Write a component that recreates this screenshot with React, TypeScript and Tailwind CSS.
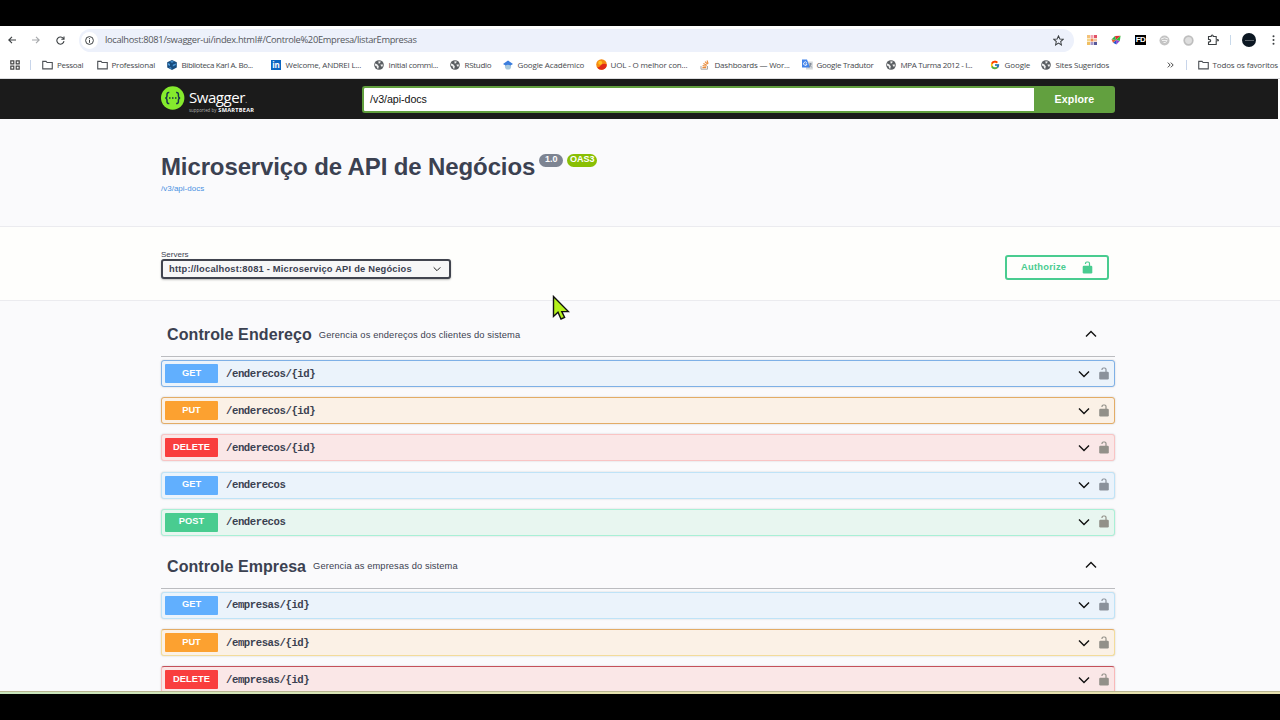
import type { ReactNode } from "react";
import { FcGoogle } from "react-icons/fc";

type Method = "GET" | "PUT" | "DELETE" | "POST";

const METHOD_STYLES: Record<Method, { block: string; badge: string; lock: string }> = {
  GET: { block: "bg-[#ebf3fb]", badge: "bg-[#61affe]", lock: "text-[#8b929b]" },
  PUT: { block: "bg-[#fbf1e6]", badge: "bg-[#fca130]", lock: "text-[#929089]" },
  DELETE: { block: "bg-[#fae7e7]", badge: "bg-[#f93e3e]", lock: "text-[#929089]" },
  POST: { block: "bg-[#e8f6f0]", badge: "bg-[#49cc90]", lock: "text-[#929089]" },
};

function Lock({ className }: { className: string }) {
  return (
    <svg viewBox="0 0 10 13" className={className} fill="none">
      <path d="M3 3V2.4Q3 1 4.4 1H5.6Q7 1 7 2.5V6" stroke="currentColor" strokeWidth="1.2" />
      <rect x="0.2" y="4.8" width="9.6" height="7.7" rx="1.2" fill="currentColor" />
    </svg>
  );
}

function Chevron({ up = false, className }: { up?: boolean; className: string }) {
  return (
    <svg viewBox="0 0 12 8" className={className} fill="none" stroke="#111" strokeWidth="1.4">
      <path d={up ? "M1 6.5 6 1.5 11 6.5" : "M1 1.5 6 6.5 11 1.5"} />
    </svg>
  );
}

function Operation({ method, path, border }: { method: Method; path: string; border: string }) {
  const s = METHOD_STYLES[method];
  return (
    <div className={`mb-[10.2px] flex h-[27px] shrink-0 items-center rounded-[3px] border pl-[3px] pr-[5px] shadow-[0_0_2px_rgba(0,0,0,0.19)] ${s.block} ${border}`}>
      <span className={`flex h-[19px] w-[53px] items-center justify-center rounded-[1px] text-[9.33px] font-bold text-white ${s.badge}`}>{method}</span>
      <span className="ml-2 flex-1 font-['Liberation_Mono',monospace] text-[10.67px] font-bold tracking-[-0.45px] text-[#3b4151]">{path}</span>
      <Chevron className="h-2 w-3" />
      <Lock className={`mb-px ml-[9px] h-[13px] w-[10px] ${s.lock}`} />
    </div>
  );
}

function Section({ title, description, titleClass, descClass, children }: { title: string; description: string; titleClass: string; descClass: string; children: ReactNode }) {
  return (
    <section>
      <header className="mb-[3px] flex h-[43px] items-center border-b border-[#bbbcc0] pl-[6px] pr-[18px]">
        <h3 className={`shrink-0 text-[16px] font-bold text-[#3b4151] ${titleClass}`}>{title}</h3>
        <span className={`flex-1 whitespace-nowrap pt-px text-[9.33px] text-[#3b4151] ${descClass}`}>{description}</span>
        <Chevron up className="mb-[3px] h-2 w-3" />
      </header>
      {children}
    </section>
  );
}

function Folder() {
  return (
    <svg viewBox="0 0 12 10" className="h-[10px] w-[11px]" fill="none" stroke="#4d5156" strokeWidth="1.2">
      <path d="M.8 1H4.4L5.6 2.3H11.2V9.2H.8Z" />
    </svg>
  );
}

function Globe() {
  return (
    <svg viewBox="0 0 10 10" className="h-[10px] w-[10px]">
      <circle cx="5" cy="5" r="4.8" fill="#5a5e62" />
      <path d="M1 3.5 3.2 4.2 4.8 6.2 4.3 8.8 3 8.2 2.8 6.4 1 5.4ZM4.4 1.2 6.8 1.5 6 3.2 4.6 3.4ZM6.4 4.6 9 4.4 8.6 6.4 7.2 6.6Z" fill="#eee" />
    </svg>
  );
}

function Boxes() {
  return (
    <svg viewBox="0 0 10 10" className="h-[10px] w-[10px]">
      <path d="M5 0 9.8 2.2V7.6L5 10 .2 7.6V2.2Z" fill="#174c7e" />
      <path d="M1 3 3 4V6L1 5ZM5.8 4.8 8.8 3.4V5L5.8 6.4ZM3 1.8 5 1 7 1.8 5 2.8ZM2.6 7 4.4 7.8V9L2.6 8.1Z" fill="#4f9bdc" />
    </svg>
  );
}

function LinkedIn() {
  return <span className="flex h-[10px] w-[10px] items-center justify-center bg-[#0a66c2] text-[8px] font-bold leading-none text-white">in</span>;
}

function Scholar() {
  return (
    <svg viewBox="0 0 10 10" className="h-[10px] w-[10px]">
      <circle cx="5" cy="6.5" r="3.1" fill="#a8c8dc" />
      <path d="M5 .4 10 4 7.5 5.6Q5 3.8 2.5 5.6L0 4Z" fill="#3b7ddd" />
    </svg>
  );
}

function Uol() {
  return (
    <svg viewBox="0 0 11 11" className="h-[11px] w-[11px]">
      <circle cx="5.5" cy="5.5" r="5.3" fill="#f58a12" />
      <path d="M10.8 5.5A5.3 5.3 0 0 1 1.2 8.6Q4 8 5.5 5.5Q8 3.8 10.8 5.5Z" fill="#e02a18" />
      <circle cx="4.2" cy="3.7" r="2" fill="#ffc322" />
    </svg>
  );
}

function Stack() {
  return (
    <svg viewBox="0 0 10 10" className="h-[10px] w-[10px]" fill="none">
      <path d="M1 6V9.2H7.5V6" stroke="#a8a8a8" />
      <path d="M2.4 7.6H6.2M2.6 5.6 6.4 6.2M3.4 3.6 6.8 5.2M5 1.6 7.6 4.2M7 .5 8.2 3.6" stroke="#e98b3a" strokeWidth="1.1" />
    </svg>
  );
}

function Translate() {
  return (
    <svg viewBox="0 0 11 11" className="h-[11px] w-[11px]">
      <rect x="4" y="2.5" width="6.8" height="8" fill="#d4d7da" />
      <path d="M0 .5H5L8 8.5H0Z" fill="#4384ea" />
      <path d="M4.8 3.8A1.7 1.7 0 1 0 5 5H3.5" stroke="white" fill="none" strokeWidth=".9" />
      <path d="M7 5H10M8.5 4V5Q8.5 7 7 8.3M7.5 6 9.8 8.4" stroke="#6d7886" fill="none" strokeWidth=".7" />
    </svg>
  );
}

function Bookmark({ icon, label, className, textClass }: { icon: ReactNode; label: string; className: string; textClass: string }) {
  return (
    <div className={`flex shrink-0 items-center whitespace-nowrap ${className}`}>
      <span className="flex w-[11px] shrink-0 justify-center">{icon}</span>
      <span className={`ml-1 ${textClass}`}>{label}</span>
    </div>
  );
}

function BookmarksBar() {
  return (
    <div className="flex h-[25px] items-center border-b border-[#dcdde0] pb-[3px] pl-[10px] font-['Open_Sans',sans-serif] text-[8px] text-[#45484c]">
      <svg viewBox="0 0 10 10" className="h-[10px] w-[10px]" fill="none" stroke="#444" strokeWidth="1.2">
        <path d="M.8.8H3.8V3.8H.8ZM6.2.8H9.2V3.8H6.2ZM.8 6.2H3.8V9.2H.8ZM6.2 6.2H9.2V9.2H6.2Z" />
      </svg>
      <span className="ml-[10px] mr-[11px] h-[10px] w-px bg-[#c8d5ea]" />
      <Bookmark icon={<Folder />} label="Pessoal" className="w-[54.5px]" textClass="tracking-[-0.3px]" />
      <Bookmark icon={<Folder />} label="Professional" className="w-[70px]" textClass="tracking-[-0.2px]" />
      <Bookmark icon={<Boxes />} label="Biblioteca Karl A. Bo..." className="w-[104px]" textClass="tracking-[-0.4px]" />
      <Bookmark icon={<LinkedIn />} label="Welcome, ANDREI L..." className="w-[103px]" textClass="tracking-[-0.2px]" />
      <Bookmark icon={<Globe />} label="Initial commi..." className="w-[76px]" textClass="tracking-[-0.3px]" />
      <Bookmark icon={<Globe />} label="RStudio" className="w-[53px]" textClass="tracking-[-0.3px]" />
      <Bookmark icon={<Scholar />} label="Google Acadêmico" className="w-[93px]" textClass="tracking-[-0.15px]" />
      <Bookmark icon={<Uol />} label="UOL - O melhor con..." className="w-[104px]" textClass="tracking-[-0.15px]" />
      <Bookmark icon={<Stack />} label="Dashboards — Wor..." className="w-[102px]" textClass="tracking-[-0.2px]" />
      <Bookmark icon={<Translate />} label="Google Tradutor" className="w-[84px]" textClass="tracking-[-0.28px]" />
      <Bookmark icon={<Globe />} label="MPA Turma 2012 - I..." className="w-[104px]" textClass="tracking-[-0.35px]" />
      <Bookmark icon={<FcGoogle className="h-[10px] w-[10px]" />} label="Google" className="w-[51px]" textClass="tracking-[-0.1px]" />
      <Bookmark icon={<Globe />} label="Sites Sugeridos" className="w-[126px]" textClass="tracking-[-0.2px]" />
      <svg viewBox="0 0 7 6" className="h-[6px] w-[7px]" fill="none" stroke="#444">
        <path d="M.8.6 3.2 3 .8 5.4M3.8.6 6.2 3 3.8 5.4" />
      </svg>
      <span className="ml-3 mr-[11px] h-[10px] w-px bg-[#c8d5ea]" />
      <Bookmark icon={<Folder />} label="Todos os favoritos" className="" textClass="tracking-[-0.15px]" />
    </div>
  );
}

function Toolbar() {
  return (
    <div className="flex h-7 items-center pl-2">
      <svg viewBox="0 0 8 8" className="h-2 w-2" fill="none" stroke="#3c4043" strokeWidth="1.1">
        <path d="M8 4H1M4 .8.8 4 4 7.2" />
      </svg>
      <svg viewBox="0 0 8 8" className="ml-4 h-2 w-2" fill="none" stroke="#a6a8ab" strokeWidth="1.1">
        <path d="M0 4H7M4 .8 7.2 4 4 7.2" />
      </svg>
      <svg viewBox="0 0 9 9" className="ml-4 h-[9px] w-[9px]" fill="none" stroke="#3c4043" strokeWidth="1.1">
        <path d="M7.6 2.8A3.6 3.6 0 1 0 8 5.2M8 .5V3.2H5.3" />
      </svg>
      <div className="ml-[14px] flex h-[23px] w-[995px] items-center rounded-full bg-[#edf1fb] pl-[2px] pr-[10px]">
        <span className="flex h-[17px] w-[17px] items-center justify-center rounded-full bg-white">
          <svg viewBox="0 0 9 9" className="h-[9px] w-[9px]" fill="none" stroke="#3c4043">
            <circle cx="4.5" cy="4.5" r="3.9" />
            <path d="M4.5 4V6.8M4.5 2.2V3.2" />
          </svg>
        </span>
        <span className="ml-[7px] flex-1 whitespace-nowrap font-['Open_Sans',sans-serif] text-[9.33px] tracking-[-0.32px] text-[#54575c]">localhost:8081/swagger-ui/index.html#/Controle%20Empresa/listarEmpresas</span>
        <svg viewBox="0 0 12 12" className="h-[11px] w-[11px]" fill="none" stroke="#3c4043" strokeWidth="1.1">
          <path d="M6 1 7.5 4.4 11.2 4.7 8.4 7.1 9.2 10.8 6 8.9 2.8 10.8 3.6 7.1.8 4.7 4.5 4.4Z" />
        </svg>
      </div>
      <svg viewBox="0 0 10 10" className="ml-[13px] h-[10px] w-[10px]">
        <path d="M0 0H3V3H0Z" fill="#f3c178" />
        <path d="M3.5 0H6.5V3H3.5Z" fill="#f1a3b0" />
        <path d="M7 0H10V3H7Z" fill="#e15166" />
        <path d="M0 3.5H3V6.5H0Z" fill="#f4d48a" />
        <path d="M3.5 3.5H6.5V6.5H3.5Z" fill="#f08a4c" />
        <path d="M7 3.5H10V6.5H7Z" fill="#f1c1a0" />
        <path d="M0 7H3V10H0Z" fill="#efbf62" />
        <path d="M3.5 7H6.5V10H3.5Z" fill="#a797c7" />
        <path d="M7 7H10V10H7Z" fill="#56589a" />
      </svg>
      <svg viewBox="0 0 10 10" className="ml-[14px] h-[10px] w-[10px]">
        <path d="M.5 4.5 4 1 5 5Z" fill="#27b84a" />
        <path d="M4 1 9.6.8 5 5Z" fill="#e03030" />
        <path d="M9.6.8 8.8 6 5 5Z" fill="#24c53a" />
        <path d="M5 5 8.8 6 5.4 9.5Z" fill="#9040d0" />
        <path d="M5 5 5.4 9.5 2 7.8Z" fill="#2458d0" />
        <path d="M.5 4.5 5 5 2 7.8Z" fill="#e86030" />
      </svg>
      <span className="ml-[14px] flex h-[10px] w-[11px] items-center justify-center bg-black font-['Liberation_Sans',sans-serif] text-[8px] font-bold leading-none tracking-[-0.5px] text-white">FD</span>
      <svg viewBox="0 0 11 11" className="ml-[13px] h-[11px] w-[11px]" fill="none">
        <circle cx="5.5" cy="5.5" r="5" fill="#c4c4c4" />
        <path d="M2 4Q5.5 1.5 9 4M3 5.5H8Q7 8.5 4.5 7.5" stroke="#f1f1f1" />
      </svg>
      <svg viewBox="0 0 11 11" className="ml-[13px] h-[11px] w-[11px]" fill="none">
        <circle cx="5.5" cy="5.5" r="4.3" fill="#dedede" stroke="#bebebe" strokeWidth="1.7" />
      </svg>
      <svg viewBox="0 0 12 12" className="ml-[13px] h-3 w-3" fill="none" stroke="#3c4043" strokeWidth="1.1">
        <path d="M1.5 2.5H4.2V1.8Q5.2.3 6.2 1.8V2.5H9.2V5.2Q12 5.2 11.2 6.8H9.2V10.5H1.5V8Q4 7.8 3.6 6.4Q3.2 5.2 1.5 5.4Z" />
      </svg>
      <span className="ml-[11px] h-[10px] w-px bg-[#c8d9ea]" />
      <span className="ml-[11px] flex h-[14px] w-[14px] items-center justify-center rounded-full bg-[#0c1722]">
        <span className="h-px w-[9px] bg-[#5d646b]" />
      </span>
      <svg viewBox="0 0 3 10" className="ml-[16px] h-[10px] w-[3px]" fill="#3c4043">
        <circle cx="1.5" cy="1.3" r="1" />
        <circle cx="1.5" cy="5" r="1" />
        <circle cx="1.5" cy="8.7" r="1" />
      </svg>
    </div>
  );
}

function SwaggerBar() {
  return (
    <div className="mr-[2px] flex h-10 items-center bg-[#1b1b1b] pl-[161px]">
      <svg viewBox="0 0 24 24" className="mb-[3px] h-6 w-6" fill="none">
        <circle cx="11.7" cy="12" r="11.7" fill="#85ea2d" />
        <path d="M8.3 6.6Q6 6.3 6 8.5V10Q6 11.8 4.3 12Q6 12.2 6 14V15.5Q6 17.7 8.3 17.4M15.1 6.6Q17.4 6.3 17.4 8.5V10Q17.4 11.8 19.1 12Q17.4 12.2 17.4 14V15.5Q17.4 17.7 15.1 17.4" stroke="#173647" strokeWidth="1.5" />
        <path d="M8 12H9.5M11 12H12.5M14 12H15.5" stroke="#173647" strokeWidth="1.4" />
      </svg>
      <div className="ml-1 w-[173px] whitespace-nowrap text-white">
        <div className="mt-[4px] font-['Open_Sans',sans-serif] text-[15px] leading-[17px] tracking-[-0.45px]">Swagger<span className="text-[9px] text-[#aaa]">.</span></div>
        <div className="flex h-[6px] items-center gap-[2px] font-['Open_Sans',sans-serif] text-[4.4px] leading-none">
          <span className="text-[#b5b5b5]">supported by</span>
          <span className="text-[5.6px] font-bold tracking-[0.25px]">SMARTBEAR</span>
        </div>
      </div>
      <div className="flex h-[27px] w-[753px]">
        <div className="flex flex-1 items-center rounded-l-[3px] border-2 border-r-0 border-[#62a03f] bg-white pl-[6px] text-[10.67px] tracking-[-0.05px] text-[#111]">/v3/api-docs</div>
        <div className="flex w-[81px] items-center justify-center rounded-r-[3px] bg-[#62a03f] text-[10.67px] font-bold tracking-[0.1px] text-white">Explore</div>
      </div>
    </div>
  );
}

export default function App() {
  return (
    <div className="relative flex h-[720px] w-[1280px] flex-col overflow-hidden bg-[#fafafc] font-['Liberation_Sans',sans-serif]">
      <div className="h-[26px] shrink-0 bg-black" />
      <div className="shrink-0 bg-white">
        <Toolbar />
        <BookmarksBar />
        <SwaggerBar />
      </div>
      <div className="h-[107px] shrink-0 pl-[161px] pt-[31px]">
        <div className="flex h-[34px] items-center">
          <h1 className="whitespace-nowrap text-[24px] font-bold tracking-[-0.12px] text-[#3b4151]">Microserviço de API de Negócios</h1>
          <span className="mb-[14px] ml-1 flex h-[13px] w-6 items-center justify-center rounded-full bg-[#7d8492] text-[9px] font-bold text-white">1.0</span>
          <span className="mb-[14px] ml-1 flex h-[13px] w-[30px] items-center justify-center rounded-full bg-[#89bf04] text-[9px] font-bold text-white">OAS3</span>
        </div>
        <div className="text-[8px] leading-[9px] text-[#4990e2]">/v3/api-docs</div>
      </div>
      <div className="flex h-[75px] shrink-0 justify-between border-y border-[#ebebef] bg-[#fefefc] pl-[161px] pr-[171px]">
        <div className="pt-[23px]">
          <div className="text-[8px] leading-[9px] text-[#3b4151]">Servers</div>
          <div className="flex h-5 w-[290px] items-center justify-between rounded-[3px] border-2 border-[#41444e] bg-[#f7f7f7] pl-[6px] pr-[8px] text-[9.33px] font-bold text-[#3b4151] shadow-[0_1px_2px_rgba(0,0,0,0.25)]">
            <span className="whitespace-nowrap pt-[2px] tracking-[0.2px]">http://localhost:8081 - Microserviço API de Negócios</span>
            <Chevron className="h-[6px] w-2" />
          </div>
        </div>
        <div className="mt-[28px] flex h-[25px] w-[104px] items-center justify-between rounded-[3px] border-2 border-[#49cc90] pl-[14px] pr-[14px] text-[9.33px] font-bold tracking-[0.25px] text-[#49cc90]">
          <span>Authorize</span>
          <Lock className="mb-px h-[13px] w-[11px]" />
        </div>
      </div>
      <div className="flex min-h-0 flex-1 flex-col overflow-hidden pl-[161px] pr-[165px] pt-[13px]">
        <Section title="Controle Endereço" description="Gerencia os endereços dos clientes do sistema" titleClass="tracking-[0.1px]" descClass="ml-[7px] tracking-[0.12px]">
          <Operation method="GET" path="/enderecos/{id}" border="border-[#7eb0e6]" />
          <Operation method="PUT" path="/enderecos/{id}" border="border-[#e3ac66]" />
          <Operation method="DELETE" path="/enderecos/{id}" border="border-[#f9c4c4]" />
          <Operation method="GET" path="/enderecos" border="border-[#bfe3f7]" />
          <Operation method="POST" path="/enderecos" border="border-[#a9f0d6]" />
        </Section>
        <Section title="Controle Empresa" description="Gerencia as empresas do sistema" titleClass="tracking-[0.08px]" descClass="ml-[7px] tracking-[0.1px]">
          <Operation method="GET" path="/empresas/{id}" border="border-[#bfe3f7]" />
          <Operation method="PUT" path="/empresas/{id}" border="border-[#f3dc9b] border-t-[#e3ac66]" />
          <Operation method="DELETE" path="/empresas/{id}" border="border-[#f9b9b9] border-t-[#c4505a]" />
        </Section>
      </div>
      <div className="h-[3px] shrink-0 border-t border-[#b9b591] bg-gradient-to-r from-[#c9e6bd] via-[#e6e2ae] to-[#e6e0ae]" />
      <div className="h-[26px] shrink-0 bg-black" />
      <svg viewBox="0 0 18 26" className="absolute left-[552px] top-[295px] h-[26px] w-[18px]">
        <path d="M1.5 1.5V21.5L6 17.3 9 24 12.6 22.4 9.8 16.6H16.4Z" fill="#b4f01c" stroke="#111" strokeWidth="1.4" />
      </svg>
    </div>
  );
}
